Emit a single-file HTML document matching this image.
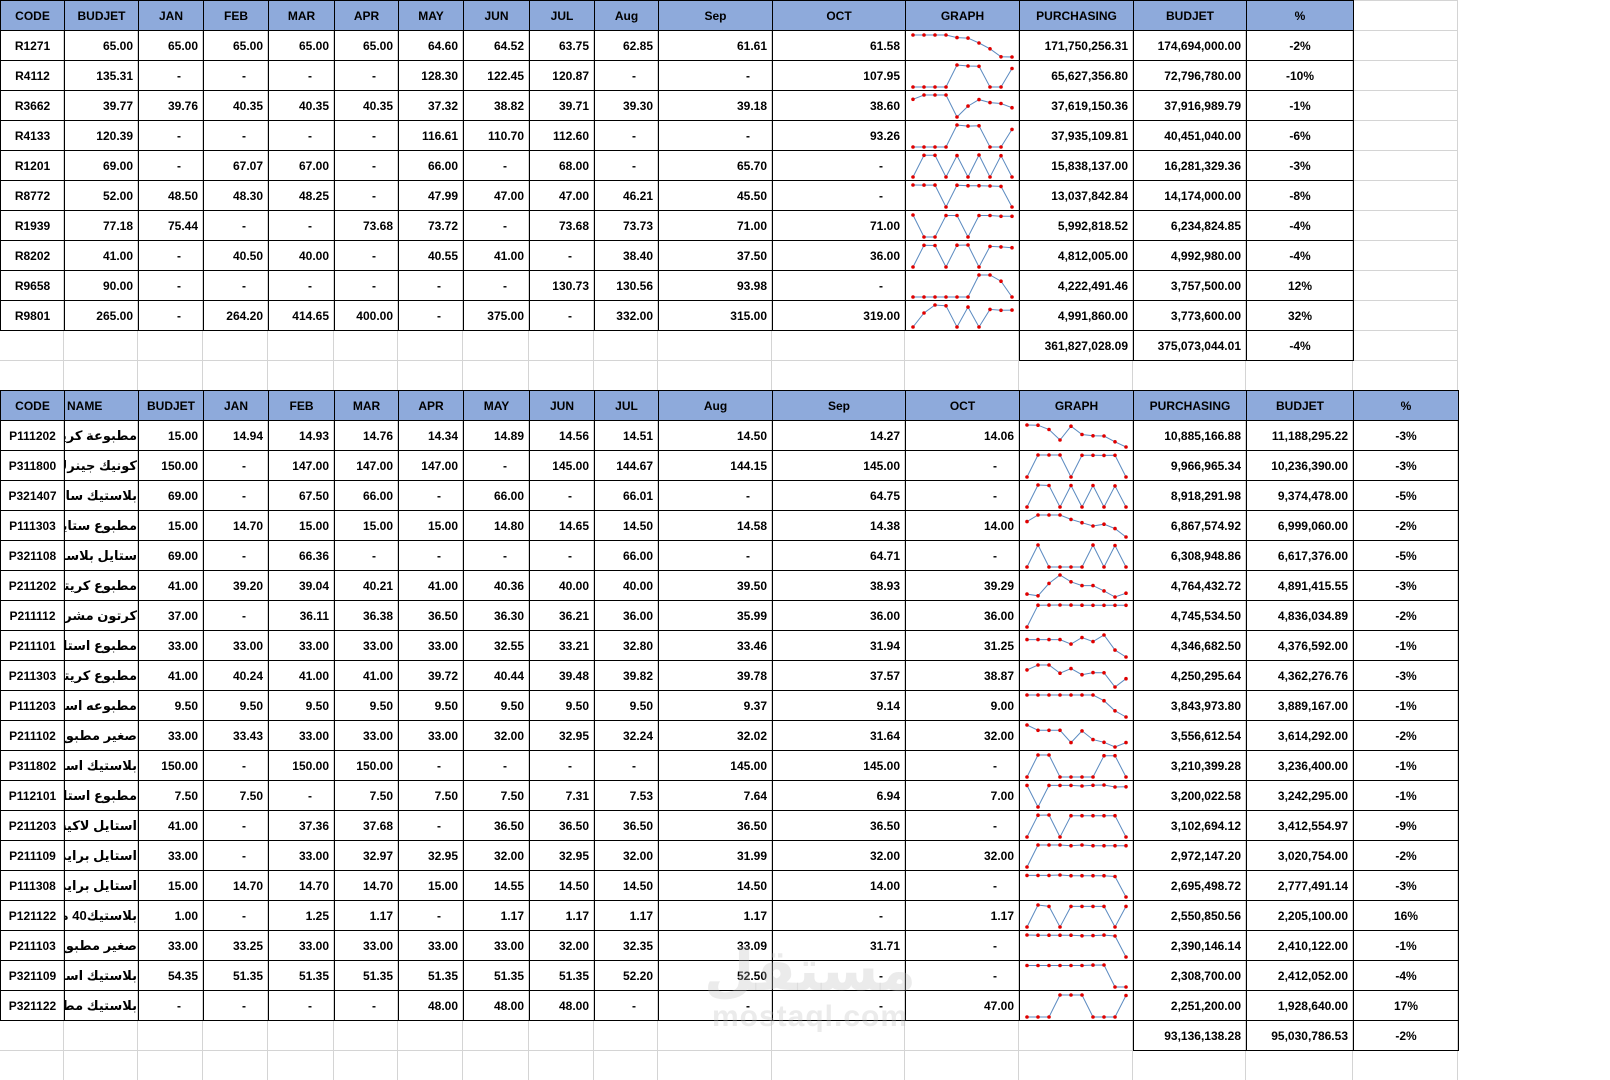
<!DOCTYPE html>
<html><head><meta charset="utf-8"><style>
html,body{margin:0;padding:0;background:#fff;width:1610px;height:1080px;overflow:hidden;position:relative}
body{font-family:"Liberation Sans","DejaVu Sans",sans-serif;font-weight:bold;font-size:12px;color:#000}
table{position:absolute;left:0;border-collapse:collapse;table-layout:fixed}
td{border:1px solid #000;height:29px;padding:0 5px;text-align:right;white-space:nowrap;overflow:hidden;line-height:14px}
tr{height:30px}
tr.h td{background:#8eaadb;text-align:center}
td.c,td.p{text-align:center}
td.z{text-align:right;padding-right:22px}
td.n{text-align:right;direction:rtl;font-size:13px;padding:0 1px}
td.e{border:none;background:transparent}
td.g{padding:0}
td.g svg{display:block}
#wm{position:absolute;left:700px;top:940px;width:220px;text-align:center;color:rgba(190,190,190,0.3);pointer-events:none}
</style></head><body>
<svg width="1610" height="1080" style="position:absolute;left:0;top:0" id="bg"></svg>

<table id="t1" style="top:0;width:1353px">
<colgroup><col style="width:64px"><col style="width:74px"><col style="width:65px"><col style="width:65px"><col style="width:66px"><col style="width:64px"><col style="width:65px"><col style="width:66px"><col style="width:65px"><col style="width:64px"><col style="width:114px"><col style="width:133px"><col style="width:114px"><col style="width:114px"><col style="width:113px"><col style="width:107px"></colgroup>
<tr class="h"><td>CODE</td><td>BUDJET</td><td>JAN</td><td>FEB</td><td>MAR</td><td>APR</td><td>MAY</td><td>JUN</td><td>JUL</td><td>Aug</td><td>Sep</td><td>OCT</td><td>GRAPH</td><td>PURCHASING</td><td>BUDJET</td><td>%</td></tr>
<tr class="d"><td class="c">R1271</td><td>65.00</td><td>65.00</td><td>65.00</td><td>65.00</td><td>65.00</td><td>64.60</td><td>64.52</td><td>63.75</td><td>62.85</td><td>61.61</td><td>61.58</td><td class="g"></td><td>171,750,256.31</td><td>174,694,000.00</td><td class="p">-2%</td></tr>
<tr class="d"><td class="c">R4112</td><td>135.31</td><td class="z">-</td><td class="z">-</td><td class="z">-</td><td class="z">-</td><td>128.30</td><td>122.45</td><td>120.87</td><td class="z">-</td><td class="z">-</td><td>107.95</td><td class="g"></td><td>65,627,356.80</td><td>72,796,780.00</td><td class="p">-10%</td></tr>
<tr class="d"><td class="c">R3662</td><td>39.77</td><td>39.76</td><td>40.35</td><td>40.35</td><td>40.35</td><td>37.32</td><td>38.82</td><td>39.71</td><td>39.30</td><td>39.18</td><td>38.60</td><td class="g"></td><td>37,619,150.36</td><td>37,916,989.79</td><td class="p">-1%</td></tr>
<tr class="d"><td class="c">R4133</td><td>120.39</td><td class="z">-</td><td class="z">-</td><td class="z">-</td><td class="z">-</td><td>116.61</td><td>110.70</td><td>112.60</td><td class="z">-</td><td class="z">-</td><td>93.26</td><td class="g"></td><td>37,935,109.81</td><td>40,451,040.00</td><td class="p">-6%</td></tr>
<tr class="d"><td class="c">R1201</td><td>69.00</td><td class="z">-</td><td>67.07</td><td>67.00</td><td class="z">-</td><td>66.00</td><td class="z">-</td><td>68.00</td><td class="z">-</td><td>65.70</td><td class="z">-</td><td class="g"></td><td>15,838,137.00</td><td>16,281,329.36</td><td class="p">-3%</td></tr>
<tr class="d"><td class="c">R8772</td><td>52.00</td><td>48.50</td><td>48.30</td><td>48.25</td><td class="z">-</td><td>47.99</td><td>47.00</td><td>47.00</td><td>46.21</td><td>45.50</td><td class="z">-</td><td class="g"></td><td>13,037,842.84</td><td>14,174,000.00</td><td class="p">-8%</td></tr>
<tr class="d"><td class="c">R1939</td><td>77.18</td><td>75.44</td><td class="z">-</td><td class="z">-</td><td>73.68</td><td>73.72</td><td class="z">-</td><td>73.68</td><td>73.73</td><td>71.00</td><td>71.00</td><td class="g"></td><td>5,992,818.52</td><td>6,234,824.85</td><td class="p">-4%</td></tr>
<tr class="d"><td class="c">R8202</td><td>41.00</td><td class="z">-</td><td>40.50</td><td>40.00</td><td class="z">-</td><td>40.55</td><td>41.00</td><td class="z">-</td><td>38.40</td><td>37.50</td><td>36.00</td><td class="g"></td><td>4,812,005.00</td><td>4,992,980.00</td><td class="p">-4%</td></tr>
<tr class="d"><td class="c">R9658</td><td>90.00</td><td class="z">-</td><td class="z">-</td><td class="z">-</td><td class="z">-</td><td class="z">-</td><td class="z">-</td><td>130.73</td><td>130.56</td><td>93.98</td><td class="z">-</td><td class="g"></td><td>4,222,491.46</td><td>3,757,500.00</td><td class="p">12%</td></tr>
<tr class="d"><td class="c">R9801</td><td>265.00</td><td class="z">-</td><td>264.20</td><td>414.65</td><td>400.00</td><td class="z">-</td><td>375.00</td><td class="z">-</td><td>332.00</td><td>315.00</td><td>319.00</td><td class="g"></td><td>4,991,860.00</td><td>3,773,600.00</td><td class="p">32%</td></tr>
<tr><td class="e"></td><td class="e"></td><td class="e"></td><td class="e"></td><td class="e"></td><td class="e"></td><td class="e"></td><td class="e"></td><td class="e"></td><td class="e"></td><td class="e"></td><td class="e"></td><td class="e"></td><td>361,827,028.09</td><td>375,073,044.01</td><td class="p">-4%</td></tr>
</table>

<table id="t2" style="top:390px;width:1458px">
<colgroup><col style="width:64px"><col style="width:74px"><col style="width:65px"><col style="width:65px"><col style="width:66px"><col style="width:64px"><col style="width:65px"><col style="width:66px"><col style="width:65px"><col style="width:64px"><col style="width:114px"><col style="width:133px"><col style="width:114px"><col style="width:114px"><col style="width:113px"><col style="width:107px"><col style="width:105px"></colgroup>
<tr class="h"><td>CODE</td><td style="text-align:left;padding-left:2px">NAME</td><td>BUDJET</td><td>JAN</td><td>FEB</td><td>MAR</td><td>APR</td><td>MAY</td><td>JUN</td><td>JUL</td><td>Aug</td><td>Sep</td><td>OCT</td><td>GRAPH</td><td>PURCHASING</td><td>BUDJET</td><td>%</td></tr>
<tr class="d"><td class="c">P111202</td><td class="n">مطبوعة كريتال لا</td><td>15.00</td><td>14.94</td><td>14.93</td><td>14.76</td><td>14.34</td><td>14.89</td><td>14.56</td><td>14.51</td><td>14.50</td><td>14.27</td><td>14.06</td><td class="g"></td><td>10,885,166.88</td><td>11,188,295.22</td><td class="p">-3%</td></tr>
<tr class="d"><td class="c">P311800</td><td class="n">كونيك جينرك</td><td>150.00</td><td class="z">-</td><td>147.00</td><td>147.00</td><td>147.00</td><td class="z">-</td><td>145.00</td><td>144.67</td><td>144.15</td><td>145.00</td><td class="z">-</td><td class="g"></td><td>9,966,965.34</td><td>10,236,390.00</td><td class="p">-3%</td></tr>
<tr class="d"><td class="c">P321407</td><td class="n">بلاستيك ساتن</td><td>69.00</td><td class="z">-</td><td>67.50</td><td>66.00</td><td class="z">-</td><td>66.00</td><td class="z">-</td><td>66.01</td><td class="z">-</td><td>64.75</td><td class="z">-</td><td class="g"></td><td>8,918,291.98</td><td>9,374,478.00</td><td class="p">-5%</td></tr>
<tr class="d"><td class="c">P111303</td><td class="n">مطبوع ستايل لاك</td><td>15.00</td><td>14.70</td><td>15.00</td><td>15.00</td><td>15.00</td><td>14.80</td><td>14.65</td><td>14.50</td><td>14.58</td><td>14.38</td><td>14.00</td><td class="g"></td><td>6,867,574.92</td><td>6,999,060.00</td><td class="p">-2%</td></tr>
<tr class="d"><td class="c">P321108</td><td class="n">ستايل بلاستيك</td><td>69.00</td><td class="z">-</td><td>66.36</td><td class="z">-</td><td class="z">-</td><td class="z">-</td><td class="z">-</td><td>66.00</td><td class="z">-</td><td>64.71</td><td class="z">-</td><td class="g"></td><td>6,308,948.86</td><td>6,617,376.00</td><td class="p">-5%</td></tr>
<tr class="d"><td class="c">P211202</td><td class="n">مطبوع كريتال لا</td><td>41.00</td><td>39.20</td><td>39.04</td><td>40.21</td><td>41.00</td><td>40.36</td><td>40.00</td><td>40.00</td><td>39.50</td><td>38.93</td><td>39.29</td><td class="g"></td><td>4,764,432.72</td><td>4,891,415.55</td><td class="p">-3%</td></tr>
<tr class="d"><td class="c">P211112</td><td class="n">كرتون مشروعات م</td><td>37.00</td><td class="z">-</td><td>36.11</td><td>36.38</td><td>36.50</td><td>36.30</td><td>36.21</td><td>36.00</td><td>35.99</td><td>36.00</td><td>36.00</td><td class="g"></td><td>4,745,534.50</td><td>4,836,034.89</td><td class="p">-2%</td></tr>
<tr class="d"><td class="c">P211101</td><td class="n">مطبوع استايل لاك</td><td>33.00</td><td>33.00</td><td>33.00</td><td>33.00</td><td>33.00</td><td>32.55</td><td>33.21</td><td>32.80</td><td>33.46</td><td>31.94</td><td>31.25</td><td class="g"></td><td>4,346,682.50</td><td>4,376,592.00</td><td class="p">-1%</td></tr>
<tr class="d"><td class="c">P211303</td><td class="n">مطبوع كريتال مط</td><td>41.00</td><td>40.24</td><td>41.00</td><td>41.00</td><td>39.72</td><td>40.44</td><td>39.48</td><td>39.82</td><td>39.78</td><td>37.57</td><td>38.87</td><td class="g"></td><td>4,250,295.64</td><td>4,362,276.76</td><td class="p">-3%</td></tr>
<tr class="d"><td class="c">P111203</td><td class="n">مطبوعه استايل لاكيه</td><td>9.50</td><td>9.50</td><td>9.50</td><td>9.50</td><td>9.50</td><td>9.50</td><td>9.50</td><td>9.50</td><td>9.37</td><td>9.14</td><td>9.00</td><td class="g"></td><td>3,843,973.80</td><td>3,889,167.00</td><td class="p">-1%</td></tr>
<tr class="d"><td class="c">P211102</td><td class="n">صغير مطبوع</td><td>33.00</td><td>33.43</td><td>33.00</td><td>33.00</td><td>33.00</td><td>32.00</td><td>32.95</td><td>32.24</td><td>32.02</td><td>31.64</td><td>32.00</td><td class="g"></td><td>3,556,612.54</td><td>3,614,292.00</td><td class="p">-2%</td></tr>
<tr class="d"><td class="c">P311802</td><td class="n">بلاستيك استايل لاك</td><td>150.00</td><td class="z">-</td><td>150.00</td><td>150.00</td><td class="z">-</td><td class="z">-</td><td class="z">-</td><td class="z">-</td><td>145.00</td><td>145.00</td><td class="z">-</td><td class="g"></td><td>3,210,399.28</td><td>3,236,400.00</td><td class="p">-1%</td></tr>
<tr class="d"><td class="c">P112101</td><td class="n">مطبوع استايل لاكيه</td><td>7.50</td><td>7.50</td><td class="z">-</td><td>7.50</td><td>7.50</td><td>7.50</td><td>7.31</td><td>7.53</td><td>7.64</td><td>6.94</td><td>7.00</td><td class="g"></td><td>3,200,022.58</td><td>3,242,295.00</td><td class="p">-1%</td></tr>
<tr class="d"><td class="c">P211203</td><td class="n">استايل لاكيه دوبل</td><td>41.00</td><td class="z">-</td><td>37.36</td><td>37.68</td><td class="z">-</td><td>36.50</td><td>36.50</td><td>36.50</td><td>36.50</td><td>36.50</td><td class="z">-</td><td class="g"></td><td>3,102,694.12</td><td>3,412,554.97</td><td class="p">-9%</td></tr>
<tr class="d"><td class="c">P211109</td><td class="n">استايل برايمر م</td><td>33.00</td><td class="z">-</td><td>33.00</td><td>32.97</td><td>32.95</td><td>32.00</td><td>32.95</td><td>32.00</td><td>31.99</td><td>32.00</td><td>32.00</td><td class="g"></td><td>2,972,147.20</td><td>3,020,754.00</td><td class="p">-2%</td></tr>
<tr class="d"><td class="c">P111308</td><td class="n">استايل برايمر مط</td><td>15.00</td><td>14.70</td><td>14.70</td><td>14.70</td><td>15.00</td><td>14.55</td><td>14.50</td><td>14.50</td><td>14.50</td><td>14.00</td><td class="z">-</td><td class="g"></td><td>2,695,498.72</td><td>2,777,491.14</td><td class="p">-3%</td></tr>
<tr class="d"><td class="c">P121122</td><td class="n">بلاستيك40 ملي</td><td>1.00</td><td class="z">-</td><td>1.25</td><td>1.17</td><td class="z">-</td><td>1.17</td><td>1.17</td><td>1.17</td><td>1.17</td><td class="z">-</td><td>1.17</td><td class="g"></td><td>2,550,850.56</td><td>2,205,100.00</td><td class="p">16%</td></tr>
<tr class="d"><td class="c">P211103</td><td class="n">صغير مطبوع كريتا</td><td>33.00</td><td>33.25</td><td>33.00</td><td>33.00</td><td>33.00</td><td>33.00</td><td>32.00</td><td>32.35</td><td>33.09</td><td>31.71</td><td class="z">-</td><td class="g"></td><td>2,390,146.14</td><td>2,410,122.00</td><td class="p">-1%</td></tr>
<tr class="d"><td class="c">P321109</td><td class="n">بلاستيك استايل</td><td>54.35</td><td>51.35</td><td>51.35</td><td>51.35</td><td>51.35</td><td>51.35</td><td>51.35</td><td>52.20</td><td>52.50</td><td class="z">-</td><td class="z">-</td><td class="g"></td><td>2,308,700.00</td><td>2,412,052.00</td><td class="p">-4%</td></tr>
<tr class="d"><td class="c">P321122</td><td class="n">بلاستيك مطبوع سا</td><td class="z">-</td><td class="z">-</td><td class="z">-</td><td class="z">-</td><td>48.00</td><td>48.00</td><td>48.00</td><td class="z">-</td><td class="z">-</td><td class="z">-</td><td>47.00</td><td class="g"></td><td>2,251,200.00</td><td>1,928,640.00</td><td class="p">17%</td></tr>
<tr><td class="e"></td><td class="e"></td><td class="e"></td><td class="e"></td><td class="e"></td><td class="e"></td><td class="e"></td><td class="e"></td><td class="e"></td><td class="e"></td><td class="e"></td><td class="e"></td><td class="e"></td><td class="e"></td><td>93,136,138.28</td><td>95,030,786.53</td><td class="p">-2%</td></tr>
</table>

<div id="wm"><div style="font-size:58px;line-height:60px;font-family:'DejaVu Sans',sans-serif;font-weight:bold">مستقل</div><div style="font-size:30px;line-height:34px;font-family:'Liberation Sans',sans-serif;font-weight:bold;letter-spacing:1px">mostaql.com</div></div>

<script>
(function(){
var bg=document.getElementById('bg');
var xs=[64,138,203,268,334,398,463,529,594,658,772,905,1019,1133,1246,1353,1458];
var s='';
xs.forEach(function(x){s+='<line x1="'+(x-0.5)+'" y1="0" x2="'+(x-0.5)+'" y2="1080" stroke="#d4d4d4" stroke-width="1"/>';});
for(var y=0;y<=1080;y+=30){s+='<line x1="0" y1="'+(y+0.5)+'" x2="1458" y2="'+(y+0.5)+'" stroke="#d4d4d4" stroke-width="1"/>';}
bg.innerHTML=s;
function spark(tbl,start){
  var rows=document.querySelectorAll('#'+tbl+' tr.d');
  rows.forEach(function(r){
    var c=r.children,v=[];
    for(var i=start;i<start+10;i++){var t=c[i].textContent.trim();v.push(t==='-'?0:parseFloat(t.replace(/,/g,'')));}
    var mn=Math.min.apply(null,v),mx=Math.max.apply(null,v),rg=mx-mn||1;
    var pts=v.map(function(a,i){return [7+i*11,4+(1-(a-mn)/rg)*22];});
    var h='<svg width="113" height="29" viewBox="0 0 113 29"><polyline fill="none" stroke="#5b8ac0" stroke-width="1" points="'+pts.map(function(p){return p[0]+','+p[1].toFixed(1)}).join(' ')+'"/>';
    pts.forEach(function(p){h+='<circle cx="'+p[0]+'" cy="'+p[1].toFixed(1)+'" r="1.8" fill="#e00000"/>';});
    h+='</svg>';
    r.querySelector('td.g').innerHTML=h;
  });
}
spark('t1',2);spark('t2',3);
})();
</script>
</body></html>
